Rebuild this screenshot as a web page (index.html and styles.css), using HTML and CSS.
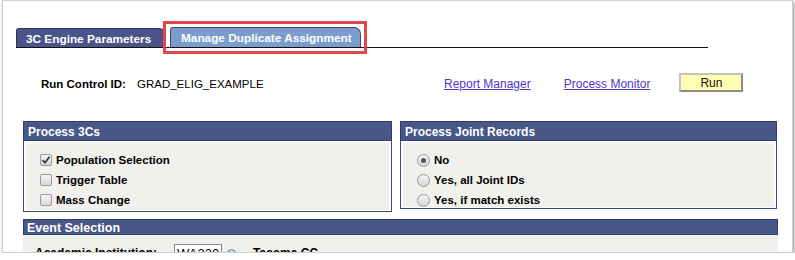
FILE: index.html
```html
<!DOCTYPE html>
<html lang="en">
<head>
    <meta charset="UTF-8">
    <title>3C Engine - Manage Duplicate Assignment</title>
    <link rel="stylesheet" href="styles.css">
</head>
<body>
    <div class="frame">
        <div class="callout"></div>

        <div class="tabs">
            <span class="tab tab-active">3C Engine Parameters</span>
            <span class="tab tab-other">Manage Duplicate Assignment</span>
        </div>

        <div class="run-row">
            <span class="label run-label">Run Control ID:</span>
            <span class="run-value">GRAD_ELIG_EXAMPLE</span>
            <a href="#" class="link link-report">Report Manager</a>
            <a href="#" class="link link-monitor">Process Monitor</a>
            <button class="run-btn">Run</button>
        </div>

        <div class="groups">
            <div class="group group-3cs">
                <div class="group-head">Process 3Cs</div>
                <div class="group-body">
                    <div class="group-inner">
                        <div class="opt"><span class="check checked"><svg width="10" height="10" viewBox="0 0 10 10"><path d="M1.5 5.2 L4 7.6 L8.6 1.8" fill="none" stroke="#3a3a3a" stroke-width="1.8"/></svg></span><span class="label">Population Selection</span></div>
                        <div class="opt"><span class="check"></span><span class="label">Trigger Table</span></div>
                        <div class="opt"><span class="check"></span><span class="label">Mass Change</span></div>
                    </div>
                </div>
            </div>
            <div class="group group-joint">
                <div class="group-head">Process Joint Records</div>
                <div class="group-body">
                    <div class="group-inner">
                        <div class="opt"><span class="radio checked"></span><span class="label">No</span></div>
                        <div class="opt"><span class="radio"></span><span class="label">Yes, all Joint IDs</span></div>
                        <div class="opt"><span class="radio"></span><span class="label">Yes, if match exists</span></div>
                    </div>
                </div>
            </div>
        </div>

        <div class="group group-event">
            <div class="group-head event-head">Event Selection</div>
            <div class="event-body">
                <div class="event-row">
                    <span class="label inst-label">Academic Institution:</span>
                    <span class="field">WA220</span>
                    <span class="lookup"></span>
                    <span class="label inst-name">Tacoma CC</span>
                </div>
            </div>
        </div>
    </div>
</body>
</html>
```

FILE: styles.css
```css
body {
    margin: 0;
    background-color: #ffffff;
    font-family: "Liberation Sans", Arial, sans-serif;
    font-size: 11.5px;
    color: #000000;
}
.frame {
    position: relative;
    box-sizing: border-box;
    width: 791px;
    height: 253px;
    margin-left: 2px;
    border: 1px solid #cfcfcf;
    box-shadow: 1px 2px 3px rgba(0, 0, 0, 0.45);
    overflow: hidden;
    background-color: #ffffff;
}
.callout {
    position: absolute;
    left: 160px;
    top: 20px;
    width: 204px;
    height: 33px;
    box-sizing: border-box;
    border: 3px solid #e0464a;
}
.label {
    font-weight: bold;
}

/* tabs */
.tabs {
    display: flex;
    align-items: flex-end;
    gap: 4px;
    width: 692px;
    height: 20px;
    margin: 26px 0 0 13px;
    border-bottom: 1px solid #111111;
}
.tab {
    box-sizing: border-box;
    height: 20px;
    padding: 3px 9px 0 9px;
    border: 1px solid #2c3358;
    border-bottom: none;
    border-radius: 3px 7px 0 0;
    color: #ffffff;
    font-weight: bold;
    font-size: 11.8px;
    white-space: nowrap;
}
.tab-active {
    width: 150px;
    height: 19px;
    background-color: #4a5488;
}
.tab-other {
    width: 191px;
    padding-left: 10px;
    background-color: #7b9dcd;
    border-color: #3d4a72;
}

/* run control row */
.run-row {
    display: flex;
    align-items: center;
    height: 19px;
    margin-top: 26px;
    padding-left: 38px;
}
.run-label {
    width: 96px;
}
.run-value {
    width: 307px;
}
.link {
    color: #5136c4;
    font-size: 12px;
    text-decoration: underline;
}
.link-report {
    margin-right: 33px;
}
.link-monitor {
    margin-right: 29px;
}
.run-btn {
    box-sizing: border-box;
    width: 64px;
    height: 19px;
    margin-top: -2px;
    padding: 0;
    background-color: #ffffb4;
    border: 2px solid #c4c4c4;
    border-right-color: #8c8c8c;
    border-bottom-color: #8c8c8c;
    font-family: "Liberation Sans", Arial, sans-serif;
    font-size: 12px;
    color: #2a0a0a;
}

/* group boxes */
.groups {
    display: flex;
    align-items: flex-start;
    gap: 8px;
    margin: 28px 0 0 20px;
}
.group-head {
    box-sizing: border-box;
    height: 20px;
    padding: 3px 0 0 4px;
    background-color: #485688;
    border: 1px solid #2f3d6e;
    color: #ffffff;
    font-weight: bold;
    font-size: 12px;
}
.group-body {
    padding: 2px 2px 1px 2px;
    border: 1px solid #3b4a85;
    border-top: none;
    background-color: #ffffff;
}
.group-inner {
    background-color: #f0f1ec;
    padding: 7px 0 0 14px;
}
.group-3cs {
    width: 369px;
}
.group-3cs .group-inner {
    height: 60px;
}
.group-joint {
    width: 377px;
}
.group-joint .group-inner {
    height: 57px;
}
.opt {
    display: flex;
    align-items: center;
    gap: 4px;
    height: 20px;
}
.check {
    box-sizing: border-box;
    display: flex;
    align-items: center;
    justify-content: center;
    width: 12px;
    height: 12px;
    border: 1px solid #9a9a9a;
    border-radius: 2px;
    background: linear-gradient(#f6f6f6, #d8d8d8);
}
.radio {
    box-sizing: border-box;
    display: flex;
    align-items: center;
    justify-content: center;
    width: 13px;
    height: 13px;
    border: 1px solid #9a9a9a;
    border-radius: 50%;
    background: linear-gradient(#f6f6f6, #d6d6d6);
}
.radio.checked::after {
    content: "";
    width: 5px;
    height: 5px;
    border-radius: 50%;
    background-color: #555555;
}

/* event selection */
.group-event {
    width: 755px;
    margin: 7px 0 0 20px;
}
.event-head {
    height: 16px;
    padding: 1px 0 0 3px;
    font-size: 12.5px;
}
.event-body {
    height: 40px;
    background-color: #f0f1ec;
}
.event-row {
    display: flex;
    align-items: center;
    height: 20px;
    padding: 8px 0 0 12px;
}
.inst-label {
    width: 139px;
    font-size: 12px;
}
.field {
    box-sizing: border-box;
    width: 48px;
    height: 18px;
    padding: 1px 0 0 2px;
    border: 1px solid #8a8a8a;
    background-color: #ffffff;
    font-size: 13px;
}
.lookup {
    box-sizing: border-box;
    width: 9px;
    height: 9px;
    margin: 0 17px 0 5px;
    border: 1px solid #6a7fa6;
    border-radius: 50%;
    background-color: #c8d8ec;
}
.inst-name {
    font-size: 12px;
}
```
